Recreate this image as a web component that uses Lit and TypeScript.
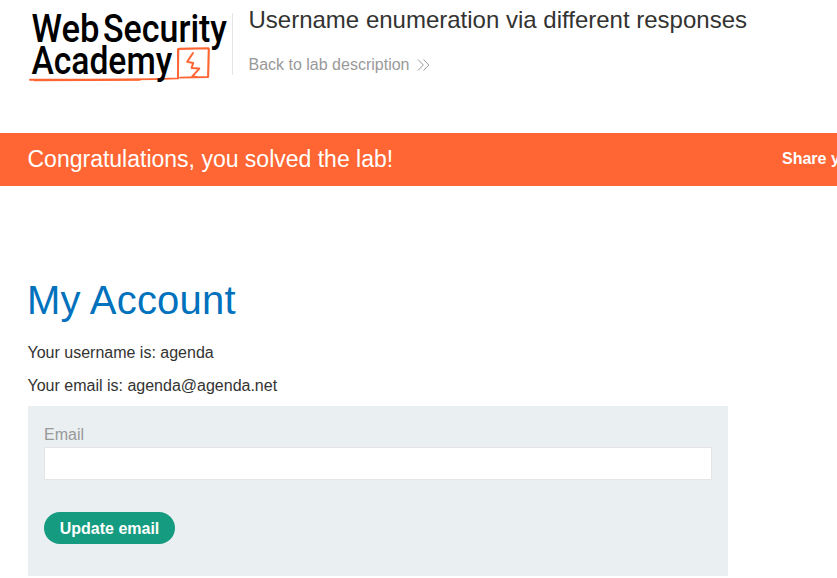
import { LitElement, html, css } from "lit";
import { customElement } from "lit/decorators.js";

@customElement("academy-logo")
class AcademyLogo extends LitElement {
  static styles = css`
    :host { display: block; width: 204px; height: 90px; }
    svg { display: block; }
    text { font: 500 38px Roboto, sans-serif; fill: #000; }
  `;
  render() {
    return html`<svg width="204" height="90" viewBox="28 0 204 90" role="img" aria-label="Web Security Academy">
      <g fill="none" stroke="#ff6633" stroke-linecap="round" stroke-linejoin="round">
        <path stroke-width="1.9" d="M30 79.7 L90 79.8 L154 79.1 L178 78.4 L178.3 49 L208.7 48.4 L208 77 L180 77.6" />
        <path stroke-width="1.1" d="M34 80.6 L140 80.3 M177.6 49 L178 78 M179 48.2 L208.5 48 M209 49 L208.6 77" />
        <path stroke-width="2" d="M193 53 L187.2 61.8 L193.2 63 L191.6 68 L199.3 68.6 L192.3 76.4 L196.7 77" />
      </g>
      <text x="31.6" y="41.6" textLength="68" lengthAdjust="spacingAndGlyphs">Web</text>
      <text x="103" y="41.6" textLength="124" lengthAdjust="spacingAndGlyphs">Security</text>
      <text x="31.4" y="74" textLength="140.8" lengthAdjust="spacingAndGlyphs">Academy</text>
    </svg>`;
  }
}

@customElement("app-root")
class AppRoot extends LitElement {
  static styles = css`
    :host {
      display: block;
      height: 578px;
      overflow: hidden;
      background: #fff;
      color: #333332;
      font: 16px/20px "Liberation Sans", Arial, sans-serif;
    }
    * { box-sizing: border-box; }
    h1, h2, p { margin: 0; font-weight: 400; }
    header { display: flex; height: 133px; padding-left: 28px; }
    .titles { margin-top: 13px; height: 62px; padding-left: 15.5px; border-left: 1px solid #e5e5e5; }
    h2 { font-size: 24px; line-height: 28px; margin-top: -7px; white-space: nowrap; }
    .back { display: flex; align-items: center; gap: 8px; margin-top: 21px; color: #999; text-decoration: none; }
    .back svg { margin-top: -1px; }
    .banner {
      display: flex;
      align-items: center;
      justify-content: space-between;
      height: 53px;
      padding: 0 0 2px 27.5px;
      background: #ff6633;
      color: #fff;
      white-space: nowrap;
    }
    .solved { font-size: 23px; line-height: 28px; }
    .share { width: 55px; overflow: hidden; font-weight: 700; }
    main { padding: 90px 0 0 28px; }
    h1 { margin-left: -1px; font-size: 40px; line-height: 48px; letter-spacing: 0.2px; color: #0071bd; }
    .line { margin: 13px 0 0 -0.5px; }
    .first { margin-top: 19px; }
    form { width: 700px; height: 170px; margin-top: 10px; padding: 19px 16px; background: #eaeff2; }
    label { display: block; height: 22px; color: #999; }
    input { display: block; width: 668px; height: 33px; border: 1px solid #e5e5e5; background: #fff; font: inherit; padding: 0 8px; outline: 0; }
    button {
      display: block;
      width: 131px;
      height: 32px;
      margin-top: 32px;
      padding: 1px 0 0;
      border: 0;
      border-radius: 16px;
      background: #159b80;
      color: #fff;
      font: 700 16px/31px "Liberation Sans", Arial, sans-serif;
    }
  `;
  render() {
    return html`
      <header>
        <academy-logo></academy-logo>
        <div class="titles">
          <h2>Username enumeration via different responses</h2>
          <a class="back">Back to lab description
            <svg width="13" height="12" viewBox="0 0 13 12" fill="none" stroke="#999" stroke-width="1">
              <path d="M1 .5 L6.3 6 L1 11.5 M6.5 .5 L11.8 6 L6.5 11.5" />
            </svg>
          </a>
        </div>
      </header>
      <section class="banner">
        <span class="solved">Congratulations, you solved the lab!</span>
        <span class="share">Share your skills!</span>
      </section>
      <main>
        <h1>My Account</h1>
        <p class="line first">Your username is: agenda</p>
        <p class="line">Your email is: agenda@agenda.net</p>
        <form>
          <label for="email">Email</label>
          <input id="email" type="email" />
          <button type="button">Update email</button>
        </form>
      </main>
    `;
  }
}
